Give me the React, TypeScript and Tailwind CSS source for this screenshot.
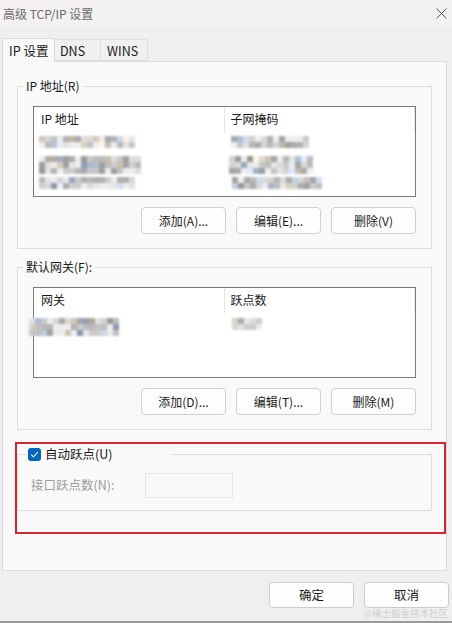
import React from "react";

function Mosaic({ w, h, seed, cell = 6 }: { w: number; h: number; seed: number; cell?: number }) {
  const cols = Math.ceil(w / cell);
  const rows = Math.ceil(h / cell);
  let s = seed * 7919 + 13;
  const rnd = () => {
    s = (s * 9301 + 49297) % 233280;
    return s / 233280;
  };
  const cells: string[] = [];
  for (let i = 0; i < cols * rows; i++) {
    const v = rnd();
    const t = rnd();
    const g = Math.round(140 + v * 100);
    if (t < 0.1) cells.push(`rgb(${g - 20},${g - 5},${g + 20})`);
    else if (t < 0.18) cells.push(`rgb(${g + 15},${g + 5},${g - 15})`);
    else if (t < 0.3) cells.push("rgb(236,236,236)");
    else cells.push(`rgb(${g},${g},${g})`);
  }
  return (
    <div
      className="grid blur-[0.8px] opacity-90"
      style={{ gridTemplateColumns: `repeat(${cols}, ${cell}px)`, gridAutoRows: `${cell}px`, width: w, height: h }}
    >
      {cells.map((c, i) => (
        <div key={i} style={{ background: c }} />
      ))}
    </div>
  );
}

function Btn({ label, className = "" }: { label: string; className?: string }) {
  return (
    <button className={"w-[85px] h-[27px] rounded-[4px] border border-[#d0d0d0] bg-[#fdfdfd] text-[12px] text-[#1a1a1a] " + className}>
      {label}
    </button>
  );
}

function ListHeader({ a, b }: { a: string; b: string }) {
  return (
    <div className="flex h-[25px] text-[12px] leading-[16px] text-[#1a1a1a]">
      <div className="w-[190px] pl-[7px] pt-[4px]">{a}</div>
      <div className="w-[1px] bg-[#e6e6e6]" />
      <div className="w-[190px] pl-[6px] pt-[4px]">{b}</div>
      <div className="w-[1px] bg-[#e6e6e6]" />
    </div>
  );
}

export default function App() {
  return (
    <div className="relative w-[452px] h-[623px] overflow-hidden bg-[#efefef] border-b-2 border-[#9a9a9a] font-['Noto_Sans_CJK_SC','Noto_Sans',sans-serif] text-[#1a1a1a] flex flex-col">
      {/* title bar */}
      <div className="h-[28px] bg-[#f3f1f2] flex items-center justify-between pl-[3px] pr-[5px]">
        <span className="text-[12px] text-[#6a6a6a]">高级 TCP/IP 设置</span>
        <svg width="11" height="11" viewBox="0 0 11 11" className="mt-[-1px]">
          <path d="M0.5 0.5 L10.5 10.5 M10.5 0.5 L0.5 10.5" stroke="#555" strokeWidth="1" fill="none" />
        </svg>
      </div>

      {/* tabs */}
      <div className="flex items-end h-[33px] pl-[2px] text-[12.5px]">
        <div className="h-[24px] w-[53px] bg-[#f9f9f9] border border-b-0 border-[#dadada] pl-[6px] pt-[3px] relative z-10 mb-[-1px]">IP 设置</div>
        <div className="h-[22px] w-[46px] bg-[#f0f0f0] border border-l-0 border-[#e0e0e0] pl-[5px] pt-[2px]">DNS</div>
        <div className="h-[22px] w-[47px] bg-[#f0f0f0] border border-l-0 border-[#e0e0e0] pl-[6px] pt-[2px]">WINS</div>
      </div>

      {/* panel */}
      <div className="ml-[2px] w-[445px] h-[510px] bg-[#f9f9f9] border border-[#dadada] px-[14px] flex flex-col">
        {/* IP addresses */}
        <div className="relative mt-[24px] h-[163px] border border-[#dcdcdc] px-[15px] pt-[19px]">
          <span className="absolute top-[-9px] left-[5px] px-[3px] bg-[#f9f9f9] text-[12px] leading-[16px]">IP 地址(R)</span>
          <div className="h-[91px] border border-[#7a7a7a] bg-white overflow-visible">
            <ListHeader a="IP 地址" b="子网掩码" />
            <div className="flex flex-col gap-[8px] mt-[4px]">
              <div className="flex gap-[101px] pl-[5px]">
                <Mosaic w={91} h={12} seed={1} />
                <Mosaic w={78} h={12} seed={2} />
              </div>
              <div className="flex gap-[93px] pl-[5px]">
                <Mosaic w={97} h={13} seed={3} />
                <Mosaic w={80} h={13} seed={4} />
              </div>
              <div className="flex gap-[97px] pl-[5px]">
                <Mosaic w={96} h={12} seed={5} />
                <Mosaic w={90} h={12} seed={6} />
              </div>
            </div>
          </div>
          <div className="flex justify-end gap-[10px] mt-[10px]">
            <Btn label="添加(A)..." />
            <Btn label="编辑(E)..." />
            <Btn label="删除(V)" />
          </div>
        </div>

        {/* gateways */}
        <div className="relative mt-[18px] h-[163px] border border-[#dcdcdc] px-[15px] pt-[19px]">
          <span className="absolute top-[-9px] left-[5px] px-[3px] bg-[#f9f9f9] text-[12px] leading-[16px]">默认网关(F):</span>
          <div className="h-[91px] border border-[#7a7a7a] bg-white">
            <ListHeader a="网关" b="跃点数" />
            <div className="flex gap-[113px] mt-[5px] ml-[-5px]">
              <Mosaic w={90} h={13} seed={7} />
              <Mosaic w={25} h={12} seed={8} />
            </div>
          </div>
          <div className="flex justify-end gap-[10px] mt-[10px]">
            <Btn label="添加(D)..." />
            <Btn label="编辑(T)..." />
            <Btn label="删除(M)" />
          </div>
        </div>

        {/* automatic metric */}
        <div className="relative mt-[24px] h-[57px] border border-[#dcdcdc] pt-[18px] pl-[13px]">
          <div className="absolute top-[-9px] left-[8px] w-[145px] h-[16px] flex items-center gap-[4px] bg-[#f9f9f9] pl-[2px]">
            <span className="w-[13px] h-[13px] rounded-[3px] bg-[#0067c0] flex items-center justify-center">
              <svg width="9" height="9" viewBox="0 0 9 9">
                <path d="M1.2 4.6 L3.5 6.8 L7.8 2.2" stroke="white" strokeWidth="1.1" fill="none" />
              </svg>
            </span>
            <span className="text-[12.5px] leading-[16px]">自动跃点(U)</span>
          </div>
          <div className="flex items-center">
            <span className="w-[114px] text-[12.5px] text-[#9c9c9c]">接口跃点数(N):</span>
            <div className="w-[88px] h-[25px] border border-[#e6e6e6] bg-[#f9f9f9]" />
          </div>
        </div>
      </div>

      {/* footer */}
      <div className="flex justify-end gap-[10px] pr-[3px] mt-[11px]">
        <button className="w-[85px] h-[26px] rounded-[4px] border border-[#cccccc] bg-[#fefefe] text-[12.5px]">确定</button>
        <button className="w-[85px] h-[26px] rounded-[4px] border border-[#cccccc] bg-[#fefefe] text-[12.5px]">取消</button>
      </div>

      {/* red annotation */}
      <div className="absolute left-[15px] top-[442px] w-[431px] h-[92px] border-2 border-[#d4262e]" />

      {/* watermark */}
      <span className="absolute right-[4px] bottom-[2px] text-[9.5px] leading-[12px] text-[#cfcfcf]">@稀土掘金技术社区</span>
    </div>
  );
}
